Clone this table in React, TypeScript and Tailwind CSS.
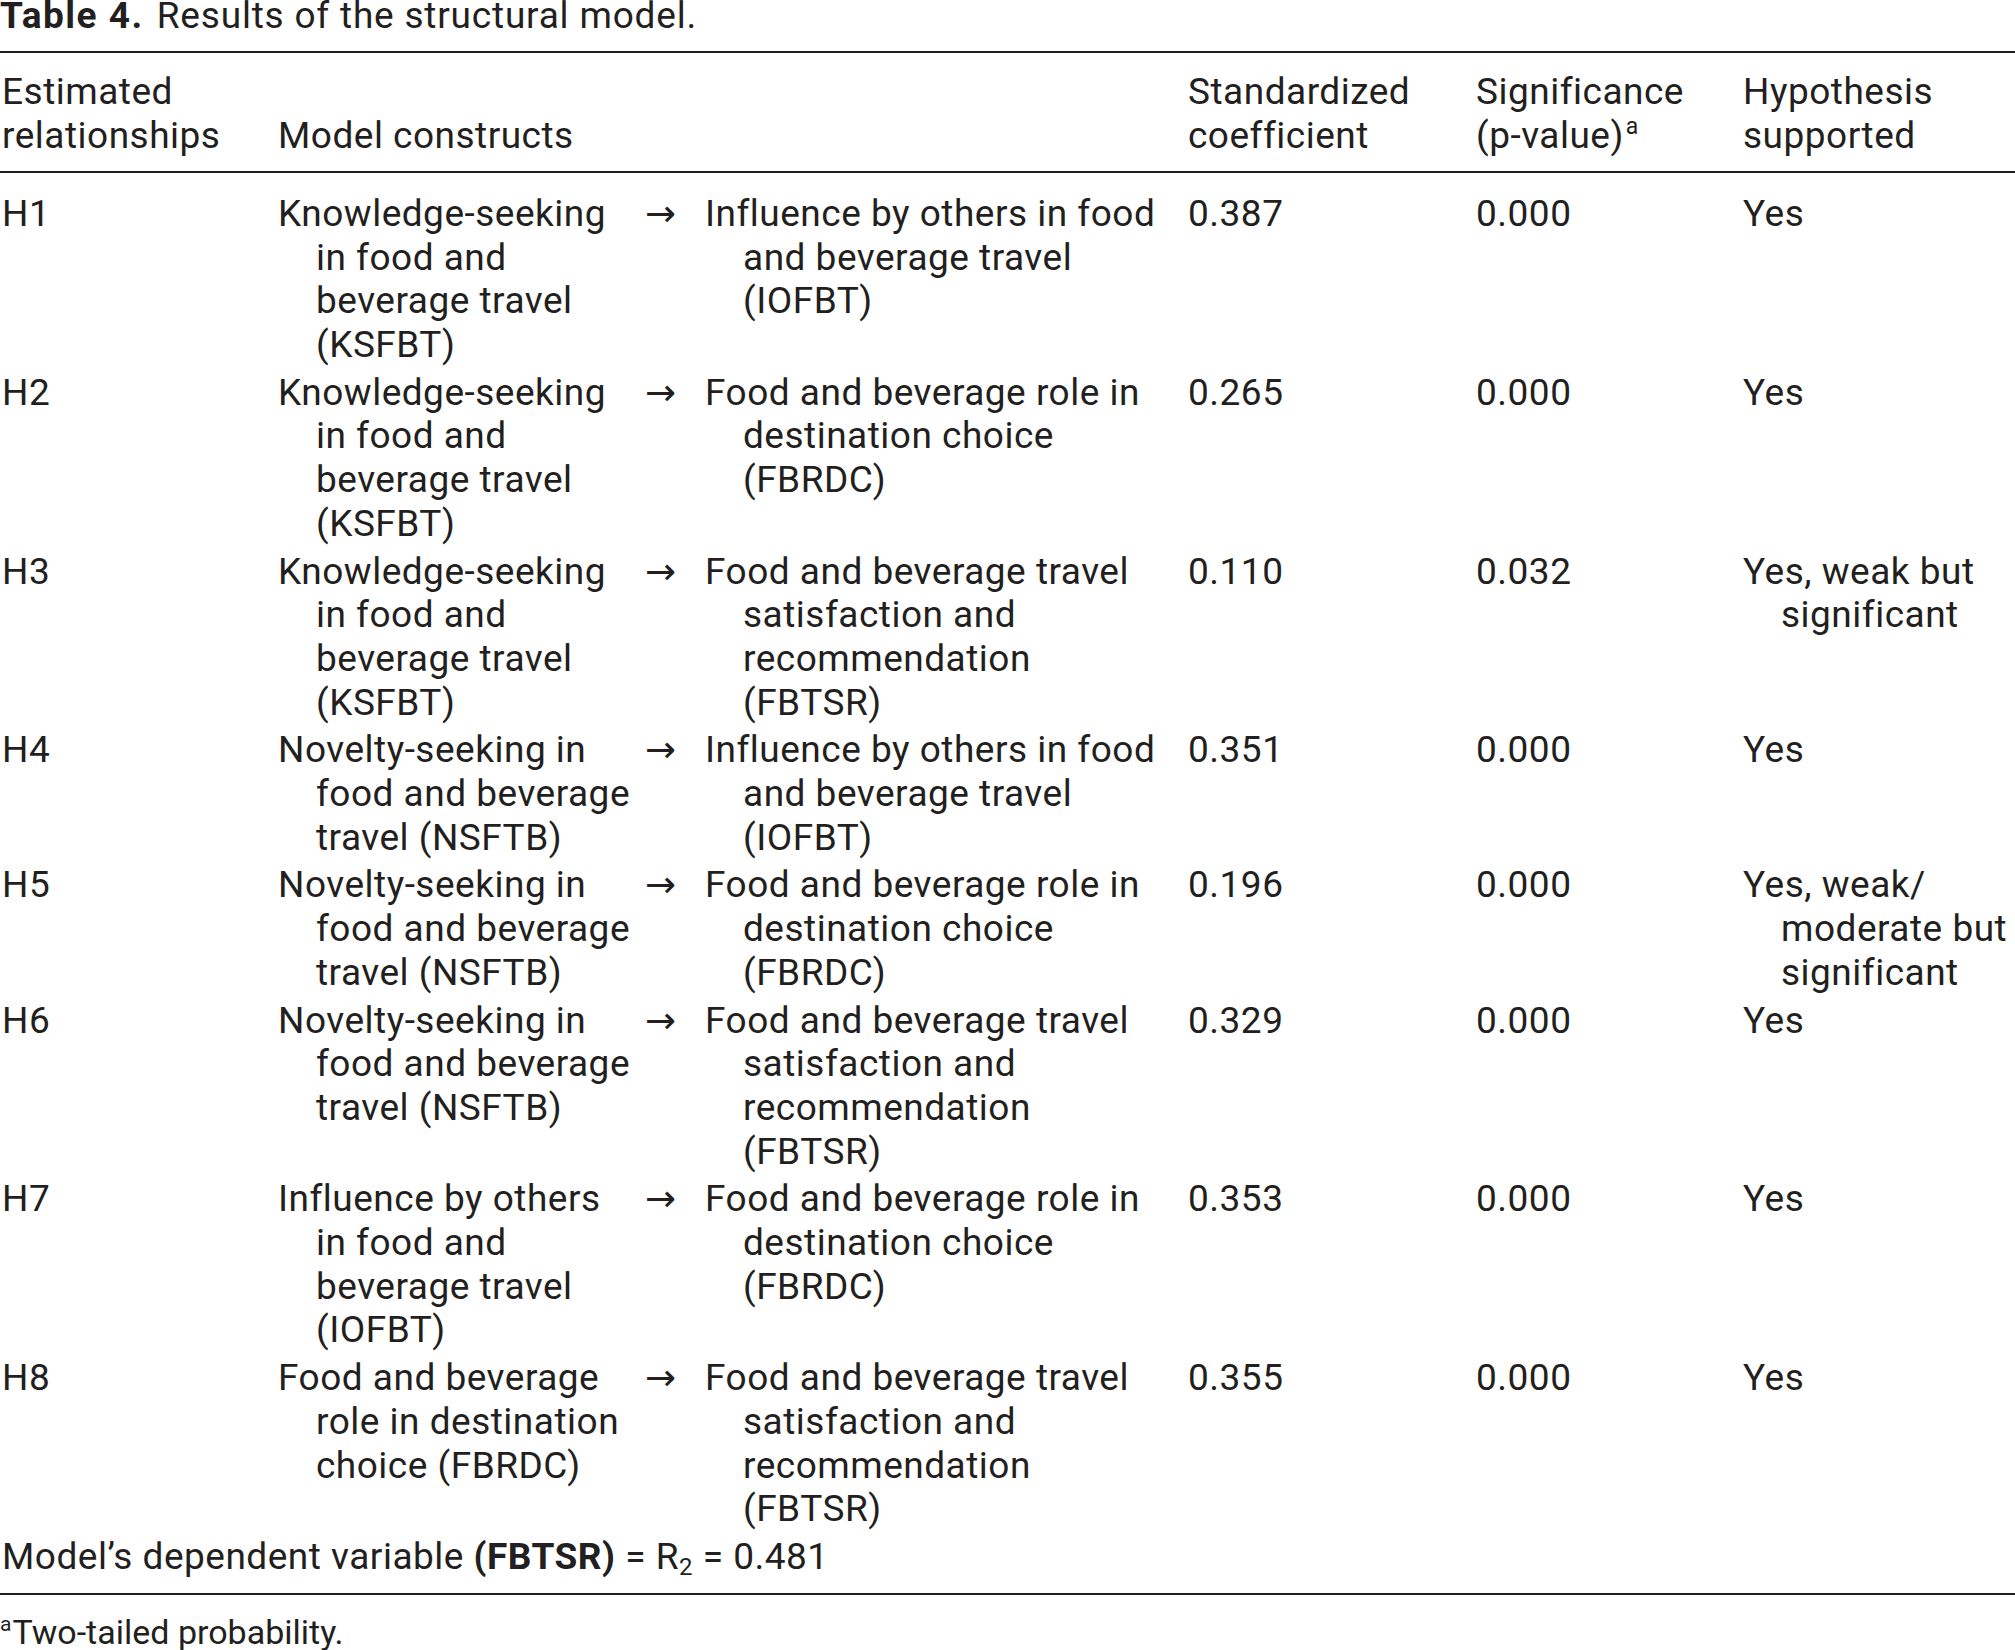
import React from "react";

type Row = {
  h: string;
  a: string[];
  b: string[];
  c: string;
  p: string;
  s: string[];
};

const KSFBT = ["Knowledge-seeking", "in food and", "beverage travel", "(KSFBT)"];
const NSFTB = ["Novelty-seeking in", "food and beverage", "travel (NSFTB)"];
const IOFBT = ["Influence by others in food", "and beverage travel", "(IOFBT)"];
const FBRDC = ["Food and beverage role in", "destination choice", "(FBRDC)"];
const FBTSR = ["Food and beverage travel", "satisfaction and", "recommendation", "(FBTSR)"];

const rows: Row[] = [
  { h: "H1", a: KSFBT, b: IOFBT, c: "0.387", p: "0.000", s: ["Yes"] },
  { h: "H2", a: KSFBT, b: FBRDC, c: "0.265", p: "0.000", s: ["Yes"] },
  { h: "H3", a: KSFBT, b: FBTSR, c: "0.110", p: "0.032", s: ["Yes, weak but", "significant"] },
  { h: "H4", a: NSFTB, b: IOFBT, c: "0.351", p: "0.000", s: ["Yes"] },
  { h: "H5", a: NSFTB, b: FBRDC, c: "0.196", p: "0.000", s: ["Yes, weak/", "moderate but", "significant"] },
  { h: "H6", a: NSFTB, b: FBTSR, c: "0.329", p: "0.000", s: ["Yes"] },
  {
    h: "H7",
    a: ["Influence by others", "in food and", "beverage travel", "(IOFBT)"],
    b: FBRDC,
    c: "0.353",
    p: "0.000",
    s: ["Yes"],
  },
  {
    h: "H8",
    a: ["Food and beverage", "role in destination", "choice (FBRDC)"],
    b: FBTSR,
    c: "0.355",
    p: "0.000",
    s: ["Yes"],
  },
];

function Lines({ lines }: { lines: string[] }) {
  return (
    <div>
      {lines.map((l, i) => (
        <div key={i} className={i === 0 ? "whitespace-nowrap" : "whitespace-nowrap pl-[38px]"}>
          {l}
        </div>
      ))}
    </div>
  );
}

const grid = "grid grid-cols-[278px_367px_60px_483px_288px_267px_1fr]";

export default function App() {
  return (
    <div
      className="w-[2015px] min-h-[1650px] bg-white text-[#231f20] text-[37px] leading-[43.7px] tracking-[0.5px]"
      style={{ fontFamily: "Roboto, 'DejaVu Sans', sans-serif" }}
    >
      <div className="leading-[32px] whitespace-nowrap">
        <span className="font-bold tracking-[1.5px]">Table 4.</span>
        <span className="ml-[13px] tracking-[0.8px]">Results of the structural model.</span>
      </div>
      <div className="mt-[19px] border-t-2 border-[#231f20]" />

      <div className={`${grid} pt-[17px] pb-[14px] border-b-2 border-[#231f20]`}>
        <div className="pl-[2px]">
          <div>Estimated</div>
          <div>relationships</div>
        </div>
        <div className="flex flex-col justify-end">
          <div className="whitespace-nowrap">Model constructs</div>
        </div>
        <div />
        <div />
        <div>
          <div>Standardized</div>
          <div>coefficient</div>
        </div>
        <div>
          <div>Significance</div>
          <div>
            (p-value)
            <sup className="text-[23px] relative -top-[14px] ml-[2px]">a</sup>
          </div>
        </div>
        <div>
          <div>Hypothesis</div>
          <div>supported</div>
        </div>
      </div>

      <div className="pt-[18.5px] border-b-2 border-[#231f20] pb-[14px]">
        {rows.map((r) => (
          <div key={r.h} className={`${grid} pb-[4px]`}>
            <div className="pl-[2px]">{r.h}</div>
            <Lines lines={r.a} />
            <div className="tracking-normal" style={{ fontFamily: "'DejaVu Sans', sans-serif" }}>
              <span className="text-[37px]">→</span>
            </div>
            <Lines lines={r.b} />
            <div>{r.c}</div>
            <div>{r.p}</div>
            <Lines lines={r.s} />
          </div>
        ))}
        <div className="whitespace-nowrap pl-[2px]">
          Model’s dependent variable <span className="font-bold">(FBTSR)</span> = R
          <sub className="text-[24px]">2</sub> = 0.481
        </div>
      </div>

      <div className="mt-[17px] text-[34px] leading-[40px] whitespace-nowrap tracking-normal">
        <sup className="text-[21px] relative -top-[13px] mr-[1px]">a</sup>Two-tailed probability.
      </div>
    </div>
  );
}
